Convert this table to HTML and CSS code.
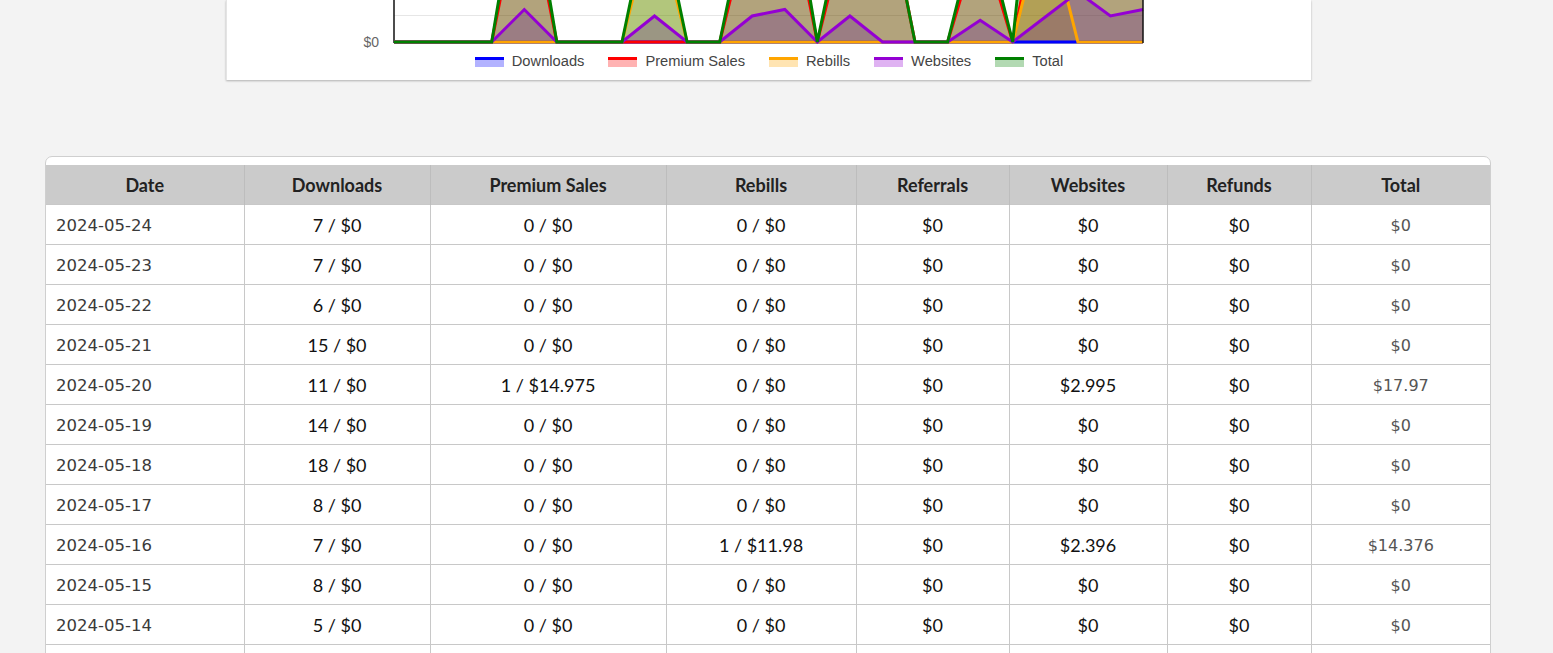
FILE: index.html
```html
<!DOCTYPE html>
<html lang="en">
<head>
<meta charset="utf-8">
<title>Earnings</title>
<link rel="stylesheet" href="styles.css">
</head>
<body>
<div class="page">
  <section class="chart-card">
    <svg class="chart" viewBox="226 0 1085 50" width="1085" height="50">
      <line class="grid" x1="394" y1="15.5" x2="1143" y2="15.5"/>
      <line class="axis" x1="394" y1="0" x2="394" y2="43"/>
      <line class="axis" x1="394" y1="42.5" x2="1143" y2="42.5"/>
      <polygon class="fl fl-ps" points="394,42 491.7,42 524.3,-120.5 556.8,42 719.7,42 752.2,-88 784.8,-120.5 817.3,42 849.9,-88 882.5,-120.5 915,42 947.6,42 980.2,-66.3 1012.7,42 1045.3,-120.5 1077.9,-174.6 1110.4,-88 1143,-120.5 1143,42"/>
      <polygon class="fl fl-rb" points="394,42 622,42 654.5,-88 687.1,42 1012.7,42 1045.3,-88 1077.9,42 1143,42"/>
      <polygon class="fl fl-ws" points="394,42 491.7,42 524.3,9.5 556.8,42 622,42 654.5,16 687.1,42 719.7,42 752.2,16 784.8,9.5 817.3,42 849.9,16 882.5,42 947.6,42 980.2,20.3 1012.7,42 1045.3,17 1077.9,-7.9 1110.4,16 1143,9.5 1143,42"/>
      <polygon class="fl fl-tt" points="394,42 491.7,42 524.3,-153 556.8,42 622,42 654.5,-114 687.1,42 719.7,42 752.2,-114 784.8,-153 817.3,42 849.9,-114 882.5,-120.5 915,42 947.6,42 980.2,-88 1012.7,42 1045.3,-275.4 1077.9,-224.5 1110.4,-114 1143,-153 1143,42"/>
      <polyline class="ln ln-dl" points="394,42 1143,42"/>
      <polyline class="ln ln-ps" points="394,42 491.7,42 524.3,-120.5 556.8,42 719.7,42 752.2,-88 784.8,-120.5 817.3,42 849.9,-88 882.5,-120.5 915,42 947.6,42 980.2,-66.3 1012.7,42 1045.3,-120.5 1077.9,-174.6 1110.4,-88 1143,-120.5"/>
      <polyline class="ln ln-rb" points="394,42 622,42 654.5,-88 687.1,42 1012.7,42 1045.3,-88 1077.9,42 1143,42"/>
      <polyline class="ln ln-ws" points="394,42 491.7,42 524.3,9.5 556.8,42 622,42 654.5,16 687.1,42 719.7,42 752.2,16 784.8,9.5 817.3,42 849.9,16 882.5,42 947.6,42 980.2,20.3 1012.7,42 1045.3,17 1077.9,-7.9 1110.4,16 1143,9.5"/>
      <polyline class="ln ln-tt" points="394,42 491.7,42 524.3,-153 556.8,42 622,42 654.5,-114 687.1,42 719.7,42 752.2,-114 784.8,-153 817.3,42 849.9,-114 882.5,-120.5 915,42 947.6,42 980.2,-88 1012.7,42 1045.3,-275.4 1077.9,-224.5 1110.4,-114 1143,-153"/>
      <line class="axis" x1="1143" y1="0" x2="1143" y2="43"/>
      <text class="tick" x="379" y="47" text-anchor="end">$0</text>
    </svg>
    <ul class="legend">
      <li><span class="swatch sw-dl"></span>Downloads</li>
      <li><span class="swatch sw-ps"></span>Premium Sales</li>
      <li><span class="swatch sw-rb"></span>Rebills</li>
      <li><span class="swatch sw-ws"></span>Websites</li>
      <li><span class="swatch sw-tt"></span>Total</li>
    </ul>
  </section>

  <section class="stats">
    <table class="stats-table">
      <colgroup>
        <col class="c-date"><col class="c-dl"><col class="c-ps"><col class="c-rb"><col class="c-rf"><col class="c-ws"><col class="c-rd"><col class="c-tt">
      </colgroup>
      <thead>
        <tr><th>Date</th><th>Downloads</th><th>Premium Sales</th><th>Rebills</th><th>Referrals</th><th>Websites</th><th>Refunds</th><th>Total</th></tr>
      </thead>
      <tbody>
        <tr><td class="date">2024-05-24</td><td>7 / $0</td><td>0 / $0</td><td>0 / $0</td><td>$0</td><td>$0</td><td>$0</td><td class="total">$0</td></tr>
        <tr><td class="date">2024-05-23</td><td>7 / $0</td><td>0 / $0</td><td>0 / $0</td><td>$0</td><td>$0</td><td>$0</td><td class="total">$0</td></tr>
        <tr><td class="date">2024-05-22</td><td>6 / $0</td><td>0 / $0</td><td>0 / $0</td><td>$0</td><td>$0</td><td>$0</td><td class="total">$0</td></tr>
        <tr><td class="date">2024-05-21</td><td>15 / $0</td><td>0 / $0</td><td>0 / $0</td><td>$0</td><td>$0</td><td>$0</td><td class="total">$0</td></tr>
        <tr><td class="date">2024-05-20</td><td>11 / $0</td><td>1 / $14.975</td><td>0 / $0</td><td>$0</td><td>$2.995</td><td>$0</td><td class="total">$17.97</td></tr>
        <tr><td class="date">2024-05-19</td><td>14 / $0</td><td>0 / $0</td><td>0 / $0</td><td>$0</td><td>$0</td><td>$0</td><td class="total">$0</td></tr>
        <tr><td class="date">2024-05-18</td><td>18 / $0</td><td>0 / $0</td><td>0 / $0</td><td>$0</td><td>$0</td><td>$0</td><td class="total">$0</td></tr>
        <tr><td class="date">2024-05-17</td><td>8 / $0</td><td>0 / $0</td><td>0 / $0</td><td>$0</td><td>$0</td><td>$0</td><td class="total">$0</td></tr>
        <tr><td class="date">2024-05-16</td><td>7 / $0</td><td>0 / $0</td><td>1 / $11.98</td><td>$0</td><td>$2.396</td><td>$0</td><td class="total">$14.376</td></tr>
        <tr><td class="date">2024-05-15</td><td>8 / $0</td><td>0 / $0</td><td>0 / $0</td><td>$0</td><td>$0</td><td>$0</td><td class="total">$0</td></tr>
        <tr><td class="date">2024-05-14</td><td>5 / $0</td><td>0 / $0</td><td>0 / $0</td><td>$0</td><td>$0</td><td>$0</td><td class="total">$0</td></tr>
        <tr><td class="date">2024-05-13</td><td>9 / $0</td><td>1 / $11.98</td><td>0 / $0</td><td>$0</td><td>$2.396</td><td>$0</td><td class="total">$14.376</td></tr>
        <tr><td class="date">2024-05-12</td><td>6 / $0</td><td>1 / $14.975</td><td>0 / $0</td><td>$0</td><td>$2.995</td><td>$0</td><td class="total">$17.97</td></tr>
      </tbody>
    </table>
  </section>
</div>
</body>
</html>
```

FILE: styles.css
```css
html, body {
  margin: 0;
  padding: 0;
}
body {
  background: #f3f3f3;
  font-family: "Liberation Sans", Arial, sans-serif;
}
.page {
  width: 1536px;
  display: flex;
  flex-direction: column;
  align-items: center;
}

/* chart card */
.chart-card {
  width: 1085px;
  height: 80px;
  background: #fff;
  box-shadow: 0 1px 2px rgba(0, 0, 0, 0.28);
  border-left: 1px solid #e4e4e4;
  box-sizing: border-box;
  margin-left: 1px;
}
.chart {
  display: block;
  margin-left: -1px;
}
.grid { stroke: #e6e6e6; stroke-width: 1; }
.axis { stroke: #111; stroke-width: 1.5; }
.fl { fill-opacity: 0.3; stroke: none; }
.ln { fill: none; stroke-width: 3; }
.ln-dl { stroke: #0000ff; }
.fl-ps { fill: #ff0000; }
.ln-ps { stroke: #ff0000; }
.fl-rb { fill: #ffa500; }
.ln-rb { stroke: #ffa500; }
.fl-ws { fill: #9400d3; }
.ln-ws { stroke: #9400d3; }
.fl-tt { fill: #008000; }
.ln-tt { stroke: #008000; }
.tick {
  font-family: "Liberation Sans", Arial, sans-serif;
  font-size: 14px;
  fill: #666;
}
.legend {
  list-style: none;
  margin: 2px 0 0;
  padding: 0;
  display: flex;
  justify-content: center;
  gap: 24px;
  font-size: 14.7px;
  color: #444;
  line-height: 18px;
}
.legend li {
  display: flex;
  align-items: center;
  gap: 8px;
}
.swatch {
  width: 29px;
  height: 7px;
  border-top: 3px solid;
  display: inline-block;
  margin-top: 1px;
}
.sw-dl { border-color: #0000ff; background: rgba(0, 0, 255, 0.3); }
.sw-ps { border-color: #ff0000; background: rgba(255, 0, 0, 0.3); }
.sw-rb { border-color: #ffa500; background: rgba(255, 165, 0, 0.3); }
.sw-ws { border-color: #9400d3; background: rgba(148, 0, 211, 0.3); }
.sw-tt { border-color: #008000; background: rgba(0, 128, 0, 0.3); }

/* stats table */
.stats {
  margin-top: 76px;
  width: 1446px;
  box-sizing: border-box;
  background: #fff;
  border: 1px solid #cfcfcf;
  border-radius: 7px;
  padding-top: 8px;
}
.stats-table {
  width: 100%;
  border-collapse: collapse;
  table-layout: fixed;
  font-family: Lato, "Open Sans", sans-serif;
  font-size: 18px;
  color: #111;
}
.c-date { width: 198px; }
.c-dl { width: 186px; }
.c-ps { width: 236px; }
.c-rb { width: 190px; }
.c-rf { width: 153px; }
.c-ws { width: 158px; }
.c-rd { width: 144px; }
.c-tt { width: 179px; }
.stats-table th {
  background: #cbcbcb;
  font-weight: 700;
  color: #222;
  height: 39px;
  padding: 0;
  border-left: 1px solid #bdbdbd;
  text-align: center;
}
.stats-table th:first-child { border-left: none; }
.stats-table td {
  height: 39px;
  padding: 0;
  text-align: center;
  border: 1px solid #c8c8c8;
}
.stats-table tr td:first-child { border-left: none; }
.stats-table tr td:last-child { border-right: none; }
.stats-table td.date {
  text-align: left;
  padding-left: 10px;
  padding-top: 2px;
  height: 37px;
  font-family: "DejaVu Sans", Verdana, sans-serif;
  font-size: 16.5px;
  color: #3a3a3a;
}
.stats-table td.total {
  padding-top: 2px;
  height: 37px;
  font-family: "DejaVu Sans", Verdana, sans-serif;
  font-size: 16px;
  color: #555;
}
```
